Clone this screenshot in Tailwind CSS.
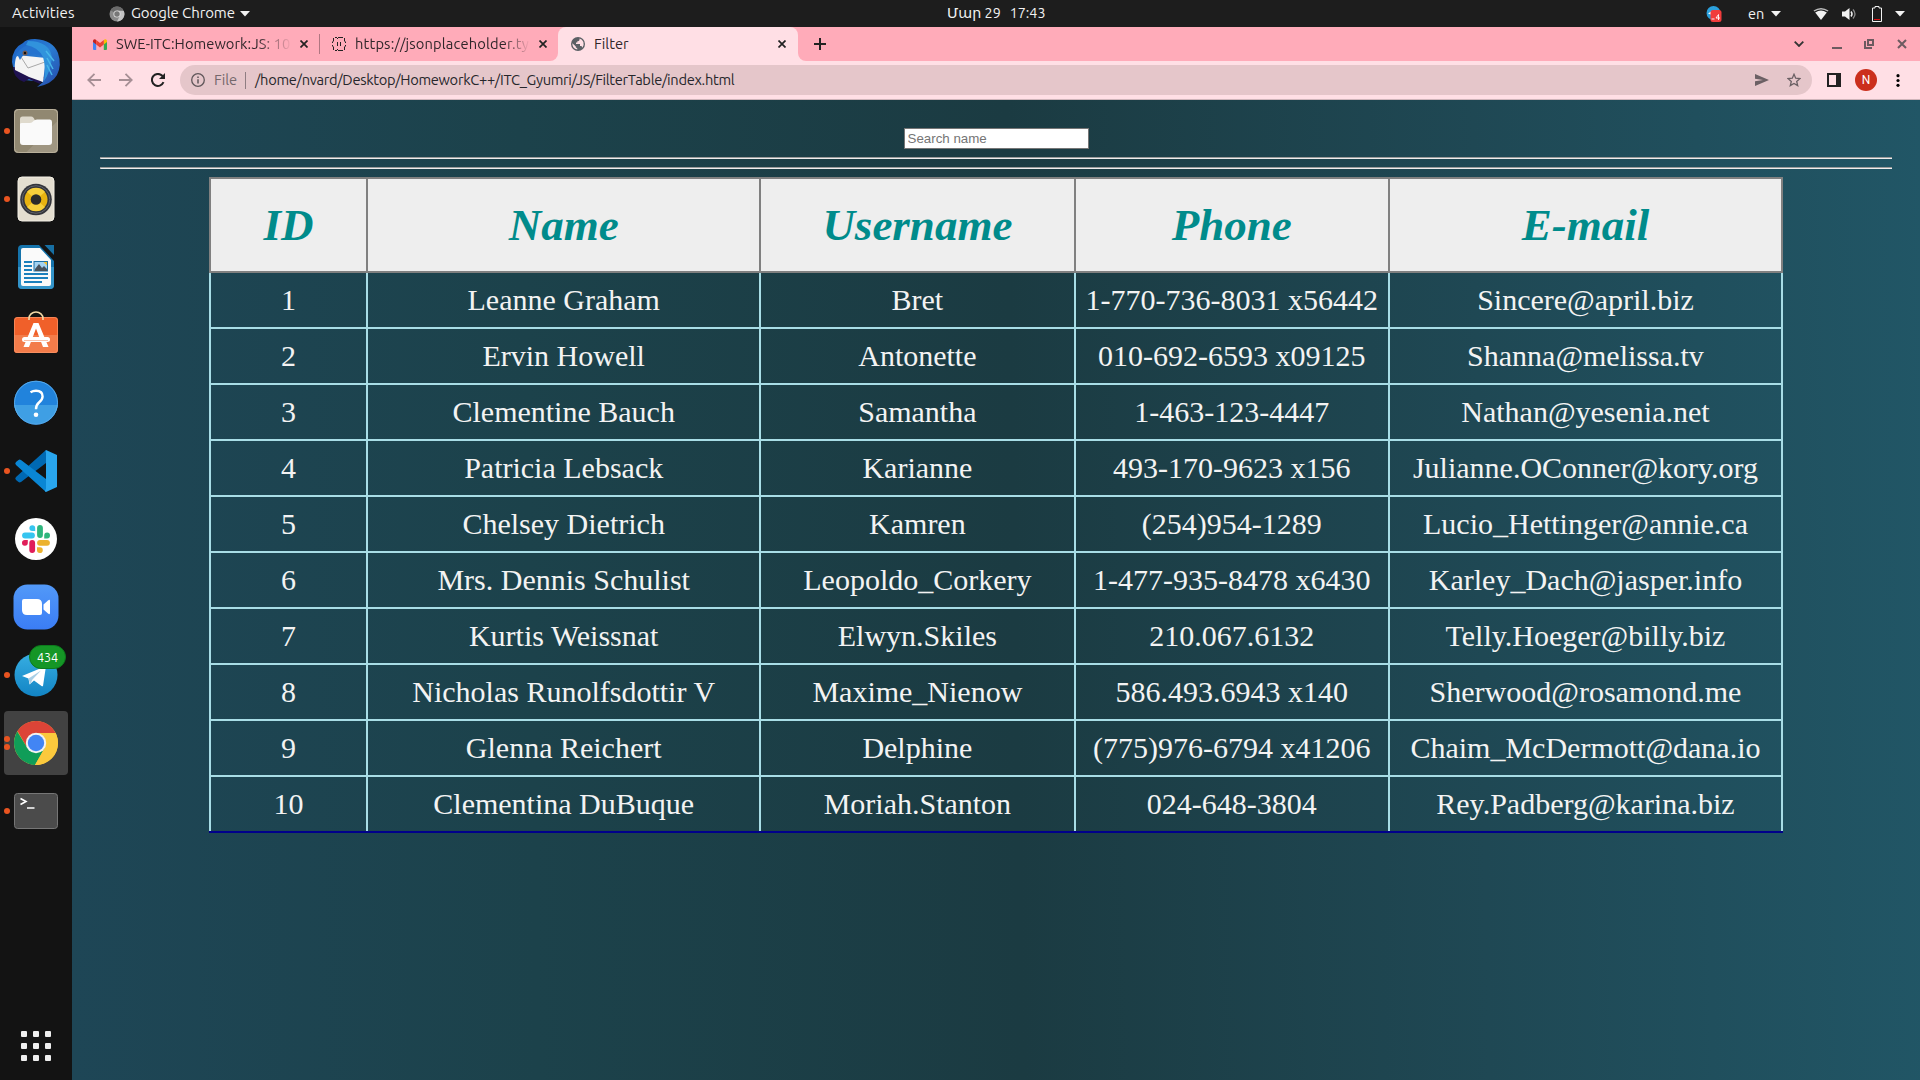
<!DOCTYPE html>
<html lang="en">
<head>
<meta charset="utf-8">
<title>Filter</title>
<script src="https://cdn.jsdelivr.net/npm/@tailwindcss/browser@4"></script>
</head>
<body class="flex h-screen w-screen flex-col overflow-hidden bg-[#131313] font-[Ubuntu,'Noto_Sans','DejaVu_Sans',sans-serif]">

<!-- System bar -->
<header class="flex h-[27px] shrink-0 items-center bg-[#1d1d1d] text-[15px] text-[#f2f2f2]">
  <div class="flex w-[947px] items-center">
    <span class="ml-3 w-[97px] tracking-[0.1px]">Activities</span>
    <svg class="h-4 w-4" viewBox="0 0 16 16"><circle cx="8" cy="8" r="7.5" fill="#8a8a8a"/><path d="M8 8 1.5 4.2A7.500 7.500 0 0 1 14.500 4.200H8Z" fill="#6b6b6b"/><path d="M11 9.500 8 15.500A7.500 7.500 0 0 0 14.800 5H9Z" fill="#c4c4c4"/><circle cx="8" cy="8" r="3.600" fill="#ddd"/><circle cx="8" cy="8" r="2.700" fill="#777"/></svg>
    <span class="ml-[6px] w-[109px] whitespace-nowrap tracking-[-0.1px]">Google Chrome</span>
    <svg class="h-[6px] w-[10px]" viewBox="0 0 10 6"><path d="M0 0H10L5 5.500Z" fill="#f2f2f2"/></svg>
  </div>
  <div class="flex gap-[9px] whitespace-nowrap text-[14.300px]"><span>Մար 29</span><span>17:43</span></div>
  <div class="flex flex-1 items-center justify-end pr-[15px] text-[14.500px]">
    <svg class="h-4 w-4" viewBox="0 0 16 16"><circle cx="7.500" cy="7" r="7" fill="#2ba0dc"/><path d="M2 7.500 6 5V9Z" fill="#fff"/><rect x="4.500" y="4" width="11" height="12" rx="2.500" fill="#f13c3c"/><path d="M5.500 13H8.500M12.500 14V8.500L10 12H14" stroke="#fff" stroke-width=".9" fill="none"/></svg>
    <span class="ml-[26px] w-[23px]">en</span>
    <svg class="h-[6px] w-[10px]" viewBox="0 0 10 6"><path d="M0 0H10L5 5.500Z" fill="#f2f2f2"/></svg>
    <svg class="ml-8 h-3 w-4" viewBox="0 0 16 12"><path d="M.5 2.500Q8-2.500 15.500 2.500L14.600 3.600Q8-.6 1.400 3.600Z" fill="#bbb"/><path d="M2.200 4.500Q8 .7 13.800 4.500L8 12Z" fill="#f2f2f2"/></svg>
    <svg class="ml-[13px] h-[14px] w-[15px]" viewBox="0 0 15 14"><path d="M0 4.500H3L7.500 1V13L3 9.500H0Z" fill="#f2f2f2"/><path d="M9 4.500Q11 7 9 9.500" stroke="#f2f2f2" stroke-width="1.500" fill="none"/><path d="M11 2.500Q15 7 11 11.500" stroke="#8a8a8a" stroke-width="1.300" fill="none"/></svg>
    <svg class="ml-[15px] h-4 w-[10px]" viewBox="0 0 10 16"><path d="M3 .5H7V2H9.500V15.500H.5V2H3Z" fill="none" stroke="#f2f2f2"/><path d="M2 13.500H8" stroke="#d11"/></svg>
    <svg class="ml-[13px] h-[6px] w-[10px]" viewBox="0 0 10 6"><path d="M0 0H10L5 5.500Z" fill="#f2f2f2"/></svg>
  </div>
</header>

<div class="flex min-h-0 flex-1">

<!-- Dock -->
<nav class="flex w-[72px] shrink-0 flex-col items-center gap-1 pt-1">
  <svg class="h-16 w-16 shrink-0" viewBox="0 0 64 64">
    <defs><linearGradient id="tb" x1="0" y1="0" x2="1" y2="1"><stop offset="0" stop-color="#1b5fc4"/><stop offset=".5" stop-color="#2a7cd2"/><stop offset="1" stop-color="#2548a8"/></linearGradient></defs>
    <path d="M21 49Q9 43 8 31Q8 17 19 12Q22 8 31 8Q49 9 54 22Q58 34 53 44Q48 53 33 56L39 51Z" fill="url(#tb)"/>
    <path d="M9 36Q9 47 20 51L25 48 36 53 40 46 12 36Z" fill="#1f1250"/>
    <path d="M13 24 42 27 39 51 25 46 11 39Q10 31 13 24Z" fill="#f4f4f4"/>
    <path d="M17 26 24 37 41 31" stroke="#a8a8a8" fill="none"/>
    <path d="M11 26Q17 13 32 13Q45 16 42 29Q36 22 24 22Q18 24 16 29L14 25Z" fill="#2573cf"/>
    <path d="M24 10Q46 10 48 27Q46 42 40 50Q42 36 39 26Q34 16 22 14Z" fill="#3193dc"/>
    <path d="M42 20 50 30M43 27 49 38M43 34 48 44" stroke="#48b7e8" stroke-width="1.500"/>
    <circle cx="21" cy="22" r="2.500" fill="#765c50"/><circle cx="21" cy="22" r="1.200" fill="#111"/>
  </svg>
  <div class="relative h-16 w-16 shrink-0"><i class="absolute top-[29px] left-0 size-[6px] rounded-full bg-[#e95420]"></i>
  <svg class="h-16 w-16" viewBox="0 0 64 64"><rect x="10" y="10" width="44" height="44" rx="4" fill="#9f9682"/><path d="M10.500 48V14Q10.500 10.500 14 10.500H50Q53.500 10.500 53.500 14V22L22 53.500H14Q10.500 53.500 10.500 50Z" fill="#918871"/><rect x="10.500" y="10.500" width="43" height="43" rx="4" fill="none" stroke="#b9b09b"/><path d="M16 30V20Q16 17.500 18.500 17.500H27Q30 17.500 31 22H34V30Z" fill="#dfdacd"/><path d="M16 25Q16 24 18 24H26Q28 24 29.500 22Q30.500 20.500 33 20.500H46Q48 20.500 48 23V43Q48 46 45 46H19Q16 46 16 43Z" fill="#fafafa"/></svg></div>
  <div class="relative h-16 w-16 shrink-0"><i class="absolute top-[29px] left-0 size-[6px] rounded-full bg-[#e95420]"></i>
  <svg class="h-16 w-16" viewBox="0 0 64 64"><rect x="14" y="10" width="36" height="44" rx="4" fill="#e4ded0" stroke="#f3efe5"/><circle cx="32" cy="32.500" r="15.800" fill="#34353b"/><circle cx="32" cy="32.500" r="13.800" fill="none" stroke="#62646c"/><circle cx="32" cy="32.500" r="11.500" fill="#e8b210"/><path d="M32 32.500 23 25A11.500 11.500 0 0 1 41 25ZM32 32.500 23 40A11.500 11.500 0 0 0 41 40Z" fill="#f7cf3b"/><circle cx="32" cy="32.500" r="5.300" fill="#2b2b2b"/></svg></div>
  <svg class="h-16 w-16 shrink-0" viewBox="0 0 64 64"><path d="M18 10H35L50 26V50Q50 54 46 54H18Q14 54 14 50V14Q14 10 18 10Z" fill="#1573ab"/><path d="M14 32H50V50Q50 54 46 54H18Q14 54 14 50Z" fill="#3394c9"/><path d="M40.500 10H50V20Z" fill="#176fa3"/><path d="M19 13H36L47 25V49Q47 51 45 51H19Q17 51 17 49V15Q17 13 19 13Z" fill="#fafafa"/><path d="M20 27H28M20 31H28M20 35H28M20 39H44M20 43H44M20 47H38" stroke="#1b80bd" stroke-width="2"/><rect x="30" y="26.500" width="13.500" height="9.500" fill="#a4d3f2" stroke="#1b70a5"/><path d="M31 36V34L35 29 38 33 40 31 43 34V36Z" fill="#48525c"/><path d="M39.500 27H43V30.500Z" fill="#f5c02d"/></svg>
  <svg class="h-16 w-16 shrink-0" viewBox="0 0 64 64"><rect x="10" y="14" width="44" height="36" rx="3.500" fill="#f0602a"/><path d="M10 32H54V46.500Q54 50 50.500 50H13.500Q10 50 10 46.500Z" fill="#f37c4a"/><rect x="10.500" y="14.500" width="43" height="35" rx="3" fill="none" stroke="#f8956a" stroke-opacity=".7"/><path d="M25 17V15.500A7 6.500 0 0 1 39 15.500V17" fill="none" stroke="#f3d9a7" stroke-width="1.600"/><path d="M29.500 20H34.500L44.500 44H39L32 25.500 25 44H19.500Z" fill="#fff"/><rect x="18" y="34" width="28" height="5" rx="2.500" fill="#fff"/><path d="M20 37.500H44" stroke="#f7c0aa"/></svg>
  <svg class="h-16 w-16 shrink-0" viewBox="0 0 64 64"><circle cx="32" cy="31.700" r="22" fill="#2183dc"/><path d="M10.200 34H53.800A22 22 0 0 1 10.200 34Z" fill="#3f9fe4"/><circle cx="32" cy="31.700" r="21.500" fill="none" stroke="#65b4ee" stroke-width=".8"/><path d="M26.500 21.300Q29 19.800 32 19.800Q38.600 19.800 38.600 25.500Q38.600 28.500 35 31.500Q32 34 32 38.200" fill="none" stroke="#fff" stroke-width="2.400"/><circle cx="32" cy="43.700" r="2.300" fill="#fff"/></svg>
  <div class="relative h-16 w-16 shrink-0"><i class="absolute top-[29px] left-0 size-[6px] rounded-full bg-[#e95420]"></i>
  <svg class="h-16 w-16" viewBox="0 0 64 64"><path d="M42 11 12 38Q10.500 39.500 12 41L14.500 43Q15.500 43.800 17 43L42 24Z" fill="#0069b3"/><path d="M42 53 12 26Q10.500 24.500 12 23L14.500 21Q15.500 20.200 17 21L42 40Z" fill="#0a86d4"/><path d="M42 11 53 16V48L42 53Q40 52 42 50V14Q41 12 42 11Z" fill="#29a6ee"/></svg></div>
  <svg class="h-16 w-16 shrink-0" viewBox="0 0 64 64"><circle cx="32" cy="32" r="21" fill="#fff"/><g stroke-width="5.800" stroke-linecap="round"><path d="M21 28.500H28" stroke="#36c5f0"/><path d="M36 21V28" stroke="#2eb67d"/><path d="M28.200 36V43" stroke="#e01e5a"/><path d="M36 35.800H43" stroke="#ecb22e"/></g><path d="M31.200 24H28.200A2.900 2.900 0 1 1 31.200 21Z" fill="#36c5f0"/><path d="M40.200 31.400V28.500A2.900 2.900 0 1 1 43 31.400Z" fill="#2eb67d"/><path d="M23.800 33V36A2.900 2.900 0 1 1 21 33Z" fill="#e01e5a"/><path d="M33 40.200H36A2.900 2.900 0 1 1 33 43Z" fill="#ecb22e"/></svg>
  <svg class="h-16 w-16 shrink-0" viewBox="0 0 64 64"><defs><linearGradient id="zm" x2="0" y2="1"><stop stop-color="#5299f8"/><stop offset="1" stop-color="#3b7df5"/></linearGradient></defs><rect x="9.500" y="9.500" width="45" height="45" rx="14" fill="url(#zm)"/><path d="M20 24H33Q38 24 38 29V38Q38 40 36 40H23Q18 40 18 35V26Q18 24 20 24Z" fill="#fff"/><path d="M39.500 29.500 44 25.500Q46 24 46 26V38Q46 40 44 38.500L39.500 34.500Z" fill="#fff"/></svg>
  <div class="relative h-16 w-16 shrink-0"><i class="absolute top-[29px] left-0 size-[6px] rounded-full bg-[#e95420]"></i>
  <svg class="h-16 w-16" viewBox="0 0 64 64"><defs><linearGradient id="tg" x2="0" y2="1"><stop stop-color="#37aee2"/><stop offset="1" stop-color="#1284c4"/></linearGradient></defs><circle cx="32" cy="32" r="21.500" fill="url(#tg)"/><path d="M18 33 42 23 39 43Q38.500 43.500 37.500 43L30 37.500 25.500 41.500 24.500 35.500Z" fill="#fff"/><path d="M24.500 35.500 37 27.500 28.500 36.500 26 41.500Z" fill="#a9cfe6"/></svg>
  <span class="absolute top-[2px] left-[25px] flex h-6 w-[37px] items-center justify-center rounded-full border border-[#0c7a1c] bg-[#159626] text-[12.500px] text-white">434</span></div>
  <div class="relative h-16 w-16 shrink-0 rounded bg-[#424242]"><i class="absolute top-[25px] left-0 size-[6px] rounded-full bg-[#e95420]"></i><i class="absolute top-[33px] left-0 size-[6px] rounded-full bg-[#e95420]"></i>
  <svg class="h-16 w-16" viewBox="0 0 64 64"><circle cx="32" cy="32" r="22" fill="#fbc93d"/><path d="M32 22H51.600A22 22 0 0 0 13.500 20L23.300 37Z" fill="#dc4437"/><path d="M13.300 20.500A22 22 0 0 0 31 54L40.700 37 23.300 37Z" fill="#109d58"/><path d="M32 22H51.600A22 22 0 0 1 31 54L40.700 37Z" fill="#fbc93d"/><circle cx="32" cy="32" r="10.200" fill="#f3f3f3"/><circle cx="32" cy="32" r="8.200" fill="#4285f4"/></svg></div>
  <div class="relative h-16 w-16 shrink-0"><i class="absolute top-[29px] left-0 size-[6px] rounded-full bg-[#e95420]"></i>
  <svg class="h-16 w-16" viewBox="0 0 64 64"><rect x="10.500" y="14.500" width="43" height="35" rx="3" fill="#4b4b4b" stroke="#767676"/><path d="M16.500 19.500 22 22.500 16.500 25.500M23 29H30.500" fill="none" stroke="#fff" stroke-width="1.600"/></svg></div>
  <div class="mt-auto mb-[19px] grid grid-cols-3 gap-[6px]">
    <i class="size-[6px] rounded-[1px] bg-[#eee]"></i><i class="size-[6px] rounded-[1px] bg-[#eee]"></i><i class="size-[6px] rounded-[1px] bg-[#eee]"></i>
    <i class="size-[6px] rounded-[1px] bg-[#eee]"></i><i class="size-[6px] rounded-[1px] bg-[#eee]"></i><i class="size-[6px] rounded-[1px] bg-[#eee]"></i>
    <i class="size-[6px] rounded-[1px] bg-[#eee]"></i><i class="size-[6px] rounded-[1px] bg-[#eee]"></i><i class="size-[6px] rounded-[1px] bg-[#eee]"></i>
  </div>
</nav>

<div class="flex min-w-0 flex-1 flex-col">

<!-- Tab strip -->
<div class="flex h-[34px] shrink-0 bg-[#ffabb9] text-[14.700px] text-[#30262a]">
  <div class="flex flex-1">
    <div class="flex w-[486px] items-center rounded-br-lg pl-[21px]">
      <svg class="h-[11px] w-[14px]" viewBox="0 0 14 11"><path d="M0 1.500V10Q0 11 1 11H3.200V4Z" fill="#4285f4"/><path d="M14 1.500V10Q14 11 13 11H10.800V4Z" fill="#34a853"/><path d="M0 2Q0 0 2 .2L3.200 1V5.500L0 3Z" fill="#c5221f"/><path d="M14 2Q14 0 12 .2L10.800 1V5.500L14 3Z" fill="#fbbc04"/><path d="M3.200 1 7 4 10.800 1V5.500L7 8.500 3.200 5.500Z" fill="#ea4335"/></svg>
      <span class="ml-[9px] w-[176px] overflow-hidden tracking-[0.05px] whitespace-nowrap mask-r-from-80% mask-r-to-100%">SWE-ITC:Homework:JS: 10</span>
      <svg class="ml-2 size-2" viewBox="0 0 8 8"><path d="M.5.5 7.500 7.500M7.500.5.5 7.500" stroke="#222" stroke-width="1.700"/></svg>
      <i class="ml-[11px] h-5 w-px bg-[#b07681]"></i>
      <svg class="ml-3 size-[14px]" viewBox="0 0 14 14" fill="none" stroke="#222"><path d="M3 .5H5M5 1.500H6M6 .5H11M3 13.500H5M5 12.500H6M6 13.500H11M1.500 1V4.500M.5 4.500V6M.5 8V9.500M1.500 9.500V13M12.500 1V4.500M13.500 4.500V6M13.500 8V9.500M12.500 9.500V13M5.500 5V9M8.500 5V9"/></svg>
      <span class="ml-[9px] w-[175px] overflow-hidden tracking-[0.15px] whitespace-nowrap mask-r-from-85% mask-r-to-100%">https://jsonplaceholder.ty</span>
      <svg class="ml-[9px] size-2" viewBox="0 0 8 8"><path d="M.5.5 7.500 7.500M7.500.5.5 7.500" stroke="#222" stroke-width="1.700"/></svg>
    </div>
    <div class="flex w-[240px] bg-[#ffdfe5]">
      <div class="-ml-2 w-2 bg-[#ffdfe5]"><div class="h-full rounded-br-lg bg-[#ffabb9]"></div></div>
      <div class="w-[240px] shrink-0 bg-[linear-gradient(#ffabb9_50%,#ffdfe5_50%)]">
      <div class="flex h-full items-center rounded-t-lg bg-[#ffdfe5] pl-[13px]">
        <svg class="size-[14px]" viewBox="0 0 14 14"><circle cx="7" cy="7" r="7" fill="#5b6065"/><path d="M1.400 6.200 4.800 9.500V10.200L6.300 11.500V12.600Q3.700 12.300 2.300 10.300Q1.100 8.300 1.400 6.200ZM8.500 1.600V2.800Q8.500 4.200 7 4.200H6.300V5.600H5V7H9V9H10.200Q11 9 11.300 10.700Q13.400 8 12.400 5Q11.300 2.400 8.500 1.600Z" fill="#ffdfe5"/></svg>
        <span class="ml-[9px] w-[184px]">Filter</span>
        <svg class="size-2" viewBox="0 0 8 8"><path d="M.5.5 7.500 7.500M7.500.5.5 7.500" stroke="#222" stroke-width="1.700"/></svg>
      </div>
      </div>
    </div>
    <div class="w-2 bg-[#ffdfe5]"><div class="h-full rounded-bl-lg bg-[#ffabb9]"></div></div>
    <svg class="mt-[11px] ml-2 size-3" viewBox="0 0 12 12"><path d="M6 0V12M0 6H12" stroke="#222" stroke-width="2"/></svg>
  </div>
  <div class="flex items-center pr-[13px]">
    <svg class="h-[6px] w-[10px]" viewBox="0 0 10 6"><path d="M.7.7 5 5 9.300.7" fill="none" stroke="#333" stroke-width="1.800"/></svg>
    <svg class="ml-7 size-[10px]" viewBox="0 0 10 10"><path d="M0 9H10" stroke="#6d5a60" stroke-width="2"/></svg>
    <svg class="ml-[22px] size-[10px]" viewBox="0 0 10 10"><path d="M4 1H9V6H4ZM1 2V9H8" fill="none" stroke="#6d5a60" stroke-width="2"/></svg>
    <svg class="ml-[23px] size-[10px]" viewBox="0 0 10 10"><path d="M1 1 9 9M9 1 1 9" stroke="#6d5a60" stroke-width="2"/></svg>
  </div>
</div>

<!-- Toolbar -->
<div class="flex h-[39px] shrink-0 items-center border-b border-[#cfb5ba] bg-[#ffdfe5] pl-[15px] text-[14.670px]">
  <svg class="size-[14px]" viewBox="0 0 14 14"><path d="M14 7H1.500M7.500 .8 1.300 7 7.500 13.200" fill="none" stroke="#a68f95" stroke-width="1.800"/></svg>
  <svg class="ml-[18px] size-[14px]" viewBox="0 0 14 14"><path d="M0 7H12.500M6.500 .8 12.700 7 6.500 13.200" fill="none" stroke="#a68f95" stroke-width="1.800"/></svg>
  <svg class="ml-[18px] size-[14px]" viewBox="0 0 14 14"><path d="M12.500 9.200A6 6 0 1 1 11.300 2.800L12.500 4" fill="none" stroke="#222" stroke-width="2"/><path d="M14 0V6H8Z" fill="#222"/></svg>
  <div class="ml-[15px] flex h-[30px] flex-1 items-center rounded-full bg-[#e5c6ca] pr-[11px] pl-[11px]">
    <svg class="size-[14px]" viewBox="0 0 14 14"><circle cx="7" cy="7" r="6.300" fill="none" stroke="#5f5659" stroke-width="1.300"/><path d="M7 6.200V10.500M7 3.500V5" stroke="#5f5659" stroke-width="1.500"/></svg>
    <span class="ml-[9px] w-[31px] text-[#74686c]">File</span>
    <i class="h-[17px] w-px bg-[#8f7d82]"></i>
    <span class="ml-[9px] flex-1 tracking-[-0.3px] whitespace-nowrap text-[#26262b]">/home/nvard/Desktop/HomeworkC++/ITC_Gyumri/JS/FilterTable/index.html</span>
    <svg class="h-3 w-[14px]" viewBox="0 0 14 12"><path d="M0 0 14 6 0 12V7.200L8 6 0 4.800Z" fill="#6b6064"/></svg>
    <svg class="ml-[18px] size-[14px]" viewBox="0 0 14 14"><path d="M7 1.300 8.700 5.200 13 5.600 9.700 8.400 10.700 12.600 7 10.400 3.300 12.600 4.300 8.400 1 5.600 5.300 5.200Z" fill="none" stroke="#6b6064" stroke-width="1.300"/></svg>
  </div>
  <svg class="ml-[15px] size-[14px]" viewBox="0 0 14 14"><path d="M1 1H13V13H1Z" fill="none" stroke="#222" stroke-width="2"/><path d="M9 0H14V14H9Z" fill="#222"/></svg>
  <span class="ml-[14px] flex size-[22px] items-center justify-center rounded-full bg-[#cb2f1c] font-[Roboto,sans-serif] text-[12px] text-white">N</span>
  <svg class="mr-[20px] ml-[19px] h-[13px] w-[4px]" viewBox="0 0 4 13"><circle cx="2" cy="1.700" r="1.600"/><circle cx="2" cy="6.500" r="1.600"/><circle cx="2" cy="11.300" r="1.600"/></svg>
</div>

<!-- Page -->
<main class="flex-1 bg-[linear-gradient(89deg,#1e4656_0%,#1c424b_25%,#1b3b42_51%,#1f4854_76%,#215666_100%)] px-7 pt-7 font-['Liberation_Serif',serif]">
  <div class="flex justify-center"><input class="block h-[21px] w-[185px] border border-[#767676] bg-white px-[3px] font-['Liberation_Sans',sans-serif] text-[13.333px] leading-none placeholder:text-[#757575]" placeholder="Search name"></div>
  <hr class="mt-2 h-[2px] border-t border-b border-l border-t-[#9a9a9a] border-b-[#eee] border-l-[#9a9a9a]">
  <hr class="mt-2 h-[2px] border-t border-b border-l border-t-[#9a9a9a] border-b-[#eee] border-l-[#9a9a9a]">
  <div class="mx-auto mt-2 w-[1574px]">
  <table class="w-full table-fixed border-collapse text-center text-[30px] leading-[34px] text-[#f3f3f3]">
    <colgroup><col class="w-[10%]"><col class="w-[25%]"><col class="w-[20%]"><col class="w-[20%]"><col class="w-[25%]"></colgroup>
    <thead><tr class="h-[94px] bg-[#eee] text-[45px] leading-[52px] text-[#008b8b] italic *:border-2 *:border-[#808080] *:p-0 *:font-bold"><th>ID</th><th>Name</th><th>Username</th><th>Phone</th><th>E-mail</th></tr></thead>
    <tbody id="rows"></tbody>
  </table>
  <div class="-mt-px h-[2px] bg-[#00008b]"></div>
  </div>
</main>
</div>
</div>

<script>
const people = [
  ["Leanne Graham","Bret","1-770-736-8031 x56442","Sincere@april.biz"],
  ["Ervin Howell","Antonette","010-692-6593 x09125","Shanna@melissa.tv"],
  ["Clementine Bauch","Samantha","1-463-123-4447","Nathan@yesenia.net"],
  ["Patricia Lebsack","Karianne","493-170-9623 x156","Julianne.OConner@kory.org"],
  ["Chelsey Dietrich","Kamren","(254)954-1289","Lucio_Hettinger@annie.ca"],
  ["Mrs. Dennis Schulist","Leopoldo_Corkery","1-477-935-8478 x6430","Karley_Dach@jasper.info"],
  ["Kurtis Weissnat","Elwyn.Skiles","210.067.6132","Telly.Hoeger@billy.biz"],
  ["Nicholas Runolfsdottir V","Maxime_Nienow","586.493.6943 x140","Sherwood@rosamond.me"],
  ["Glenna Reichert","Delphine","(775)976-6794 x41206","Chaim_McDermott@dana.io"],
  ["Clementina DuBuque","Moriah.Stanton","024-648-3804","Rey.Padberg@karina.biz"]
];
document.getElementById("rows").innerHTML = people.map((p, i) =>
  `<tr class="h-[56px] *:border-x-2 *:border-[#a8dde6] *:px-0 *:pt-0 *:whitespace-nowrap ${i < 9 ? "*:pb-0 *:border-b-2" : "*:pb-px"}"><td>${i + 1}</td>${p.map(t => `<td>${t}</td>`).join("")}</tr>`).join("");
</script>
</body>
</html>
